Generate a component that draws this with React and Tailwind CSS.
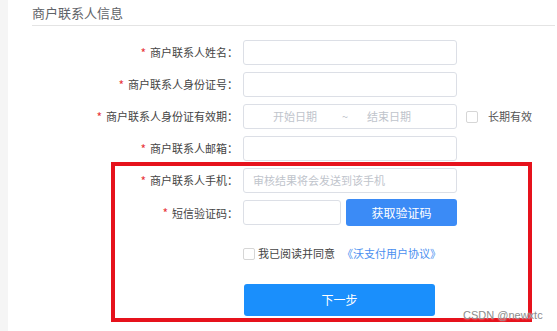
export default function App() {
  const font = { fontFamily: '"Noto Sans CJK SC", "Noto Sans", sans-serif' };
  const Label = ({ text }) => (
    <div className="w-[243px] shrink-0 flex items-center justify-end pr-[5px] text-[11px] text-[#444]">
      <span className="text-[#e8353c] mr-[4px] text-[12px] leading-none">*</span>
      <span>{text}：</span>
    </div>
  );
  const Input = ({ children, w = 'w-[214px]' }) => (
    <div className={`${w} h-[25px] border border-[#dcdfe6] rounded-[3px] bg-white flex items-center text-[11px] text-[#c0c4cc]`}>
      {children}
    </div>
  );
  return (
    <div style={font} className="relative w-[557px] h-[331px] bg-white overflow-hidden">
      <div className="absolute left-0 top-0 w-[8px] h-full bg-[#f5f5f5]" />
      <div className="flex flex-col">
        <div className="pl-[32px] pr-[2px]">
          <div className="h-[26px] border-b border-[#e4e4e4] flex items-center">
            <span className="text-[13px] text-[#5f6368] leading-none">商户联系人信息</span>
          </div>
        </div>
        <div className="mt-[14px] flex flex-col gap-[7px]">
          <div className="flex h-[25px]">
            <Label text="商户联系人姓名" />
            <Input />
          </div>
          <div className="flex h-[25px]">
            <Label text="商户联系人身份证号" />
            <Input />
          </div>
          <div className="flex h-[25px] items-center">
            <Label text="商户联系人身份证有效期" />
            <Input>
              <span className="ml-[29px]">开始日期</span>
              <span className="ml-[25px]">~</span>
              <span className="ml-[19px]">结束日期</span>
            </Input>
            <div className="ml-[9px] w-[12px] h-[12px] border border-[#d6d6d6] rounded-[2px] bg-white" />
            <span className="ml-[10px] text-[11px] text-[#555]">长期有效</span>
          </div>
          <div className="flex h-[25px]">
            <Label text="商户联系人邮箱" />
            <Input />
          </div>
          <div className="flex h-[25px]">
            <Label text="商户联系人手机" />
            <Input>
              <span className="ml-[9px]">审核结果将会发送到该手机</span>
            </Input>
          </div>
          <div className="flex h-[26px]">
            <Label text="短信验证码" />
            <Input w="w-[98px]" />
            <button className="ml-[5px] w-[111px] h-[27px] -mt-[1px] rounded-[3px] bg-[#3b8bf6] text-white text-[12px]">获取验证码</button>
          </div>
          <div className="flex h-[25px] items-center mt-[8px] pl-[243px]">
            <div className="w-[12px] h-[12px] border border-[#d6d6d6] rounded-[2px] bg-white" />
            <span className="ml-[3px] text-[11px] text-[#444]">我已阅读并同意</span>
            <span className="ml-[7px] text-[11px] text-[#4a8ff0]">《沃支付用户协议》</span>
          </div>
          <div className="flex mt-[11px] pl-[244px]">
            <button className="w-[191px] h-[32px] rounded-[3px] bg-[#1a8ffc] text-white text-[12px]">下一步</button>
          </div>
        </div>
      </div>
      <div className="absolute left-[111px] top-[162px] w-[421px] h-[160px] border-[4px] border-[#e6121c] pointer-events-none" />
      <div className="absolute left-[463px] top-[310px] text-[11px] text-[#8c8c8c] leading-none" style={{ fontFamily: '"Liberation Sans", sans-serif', textShadow: '0 0 2px #fff' }}>CSDN @newxtc</div>
    </div>
  );
}
